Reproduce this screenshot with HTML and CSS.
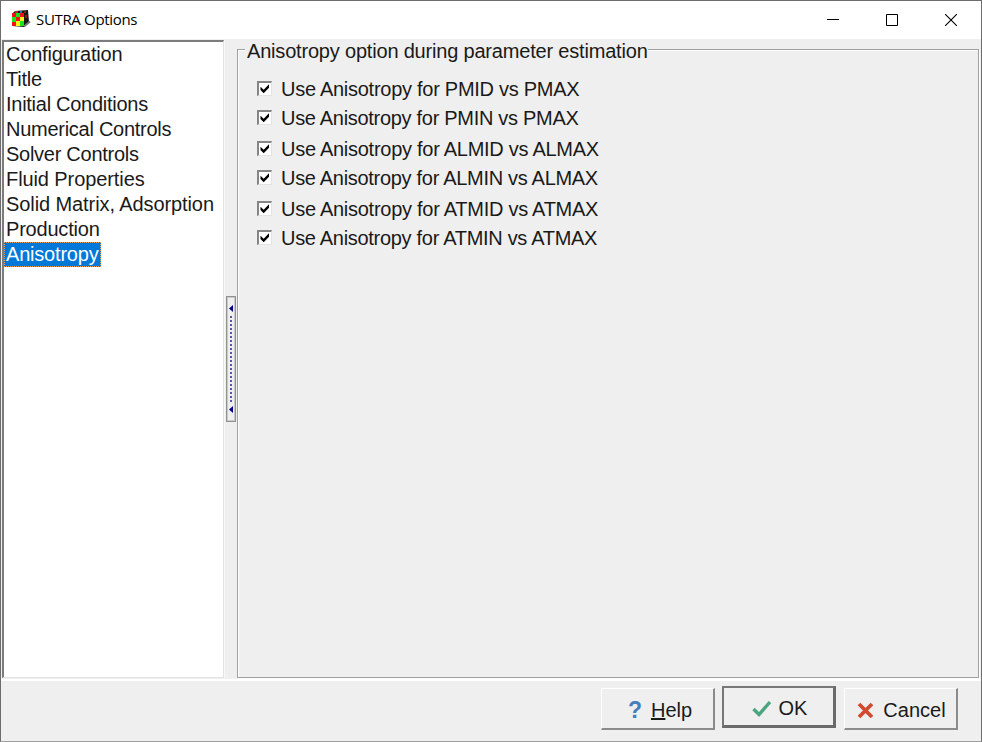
FILE: index.html
```html
<!DOCTYPE html>
<html lang="en">
<head>
<meta charset="utf-8">
<title>SUTRA Options</title>
<link rel="stylesheet" href="styles.css">
</head>
<body>
<svg class="defs" width="0" height="0"><symbol id="tick" viewBox="0 0 12 12"><path d="M1.500 3.700v3.300L4.700 10.200 10 4.700V1.300L4.700 6.700z" fill="#000"/></symbol></svg>
<div class="window">
  <header class="titlebar">
    <svg class="app-icon" width="20" height="18" viewBox="0 0 20 18"><path d="M1 4 4 1 17 0 18 12 13 17 1 16z" fill="#171717"/><path d="M4 1h3v2H4z" fill="#c22"/><path d="M9 1h2v2H9z" fill="#27c"/><path d="M13 1h2v2h-2zM14 5h2v3h-2z" fill="#8d1c1c"/><path d="M1 3h4v4H1zM9 3h4v4H9zM5 7h4v4H5zM1 12h4v4H1z" fill="#f11313"/><path d="M5 3h4v4H5zM1 7h4v5H1zM9 11h4v5H9z" fill="#19e51d"/><path d="M9 7h4v4H9zM5 11h4v5H5z" fill="#fff21a"/><path d="m13 16.500 6-5" stroke="#777" stroke-width="2"/></svg>
    <span class="caption">SUTRA Options</span>
    <div class="controls">
      <svg width="12" height="12"><path d="M0 5.500h12" stroke="#000"/></svg>
      <svg width="12" height="12"><path d="M.5.5h11v11H.5z" fill="none" stroke="#000"/></svg>
      <svg width="12" height="12"><path d="m0 0 12 12M12 0 0 12" stroke="#000" stroke-width="1.100"/></svg>
    </div>
  </header>
  <main class="content">
    <ul class="pages">
      <li><span class="snug">Configuration</span></li>
      <li><span class="snug">Title</span></li>
      <li><span class="tight">Initial Conditions</span></li>
      <li><span class="tight">Numerical Controls</span></li>
      <li><span class="tight">Solver Controls</span></li>
      <li><span class="loose">Fluid Properties</span></li>
      <li><span class="loose">Solid Matrix, Adsorption</span></li>
      <li><span class="snug">Production</span></li>
      <li><span class="snug selected">Anisotropy</span></li>
    </ul>
    <div class="splitter"><div class="grip"><svg width="4" height="7"><path d="M4 0v7L0 3.500z" fill="#00008b"/></svg><i class="dots"></i><svg width="4" height="7"><path d="M4 0v7L0 3.500z" fill="#00008b"/></svg></div></div>
    <section class="group">
      <h1 class="legend">Anisotropy option during parameter estimation</h1>
      <div class="options">
        <label class="option"><svg class="box"><use href="#tick"/></svg><span>Use Anisotropy for PMID vs PMAX</span></label>
        <label class="option"><svg class="box"><use href="#tick"/></svg><span>Use Anisotropy for PMIN vs PMAX</span></label>
        <label class="option"><svg class="box"><use href="#tick"/></svg><span>Use Anisotropy for ALMID vs ALMAX</span></label>
        <label class="option"><svg class="box"><use href="#tick"/></svg><span>Use Anisotropy for ALMIN vs ALMAX</span></label>
        <label class="option"><svg class="box"><use href="#tick"/></svg><span>Use Anisotropy for ATMID vs ATMAX</span></label>
        <label class="option"><svg class="box"><use href="#tick"/></svg><span>Use Anisotropy for ATMIN vs ATMAX</span></label>
      </div>
    </section>
  </main>
  <footer class="footer">
    <button class="button help"><b class="question">?</b><span><u>H</u>elp</span></button>
    <button class="button ok"><svg width="20" height="17"><path d="m1.500 9 5.500 5.500L18 2" fill="none" stroke="#4ca580" stroke-width="3.400"/></svg><span>OK</span></button>
    <button class="button cancel"><svg width="17" height="17"><path d="m2 2 13 13M15 2 2 15" stroke="#d24b2f" stroke-width="3.800"/></svg><span>Cancel</span></button>
  </footer>
</div>
</body>
</html>
```
FILE: styles.css
```css
* { box-sizing: border-box; }
body { margin: 0; overflow: hidden; font: 20px/25px "Liberation Sans", Arial, sans-serif; color: #1a1a1a; }
.defs { display: block; height: 0; }
.window { width: 982px; height: 742px; display: flex; flex-direction: column; background: #efefef; border: 1px solid #6d6d6d; border-bottom-color: #a0a0a0; }
.titlebar { height: 38px; flex: none; display: flex; align-items: center; background: #fff; padding: 0 24px 0 10px; }
.app-icon { flex: none; margin-top: -2px; }
.caption { font: 15px/20px "Open Sans", sans-serif; letter-spacing: -.33px; margin: -2px 0 0 5px; color: #000; }
.controls { display: flex; gap: 47px; margin-left: auto; }
.controls svg { display: block; }
.content { height: 640px; flex: none; display: flex; padding-top: 1px; }
.pages { list-style: none; margin: 0; padding: 0 0 0 1px; width: 222px; height: 638px; margin-left: 1px; background: #fff; border: solid; border-width: 2px 1px 1px 2px; border-color: #7c7c7c #e3e3e3 #e3e3e3 #7c7c7c; white-space: nowrap; }
.pages li { height: 25px; padding-left: 1px; }
.pages span { display: inline-block; }
.snug { letter-spacing: -.2px; }
.tight { letter-spacing: -.27px; }
.loose { letter-spacing: -.09px; }
.pages .selected { background: #0078d7; color: #fff; outline: 1px dotted #e8a05c; outline-offset: -1px; margin-left: -2px; padding: 0 2px; }
.splitter { width: 13px; display: flex; align-items: center; border-left: 1px solid #f8f8f8; padding: 0 0 2px 1px; }
.grip { width: 10px; height: 126px; border: 1px solid #929292; box-shadow: inset 0 0 0 1px #c9c9c9; display: flex; flex-direction: column; align-items: center; justify-content: space-between; padding: 8px 0; }
.dots { width: 2px; height: 86px; background: repeating-linear-gradient(#5555ac 0 2px, transparent 2px 4px); }
.group { width: 742px; height: 629px; margin-top: 9px; border: 1px solid #a0a0a0; box-shadow: inset 1px 1px #fff, 1px 1px #fff; padding-left: 7px; }
.legend { display: table; font-size: 20px; font-weight: normal; line-height: 24px; letter-spacing: -.19px; margin: -11px 0 0; padding: 0 0 0 2px; background: #efefef; white-space: nowrap; }
.options { padding: 12px 0 0 12px; letter-spacing: -.27px; }
.option { display: flex; align-items: center; gap: 9px; height: 29px; white-space: nowrap; }
.option:nth-child(even) { margin-bottom: 2px; letter-spacing: -.3px; }
.box { width: 15px; height: 15px; margin-top: -2px; background: #fff; border: solid; border-width: 2px 1px 1px 2px; border-color: #858585 #e3e3e3 #e3e3e3 #858585; }
.footer { flex: 1; border-top: 2px solid #fff; display: flex; justify-content: flex-end; align-items: flex-start; gap: 8px; padding: 5px 23px 0 0; }
.button { font: inherit; color: inherit; height: 42px; padding: 3px 0 0; background: #efefef; border: solid; border-width: 1px 2px 2px 1px; border-color: #fff #8b8b8b #8b8b8b #fff; display: flex; align-items: center; justify-content: center; gap: 9px; }
.help { width: 114px; margin: 2px -1px 0 0; padding-left: 5px; }
.ok { width: 114px; border-color: #777 #6a6a6a #6a6a6a #777; border-width: 2px 3px 3px 2px; padding: 4px 0 0 2px; gap: 7px; }
.cancel { width: 114px; margin-top: 2px; padding-left: 2px; }
.question { color: #447ebd; font-size: 23px; }
```
